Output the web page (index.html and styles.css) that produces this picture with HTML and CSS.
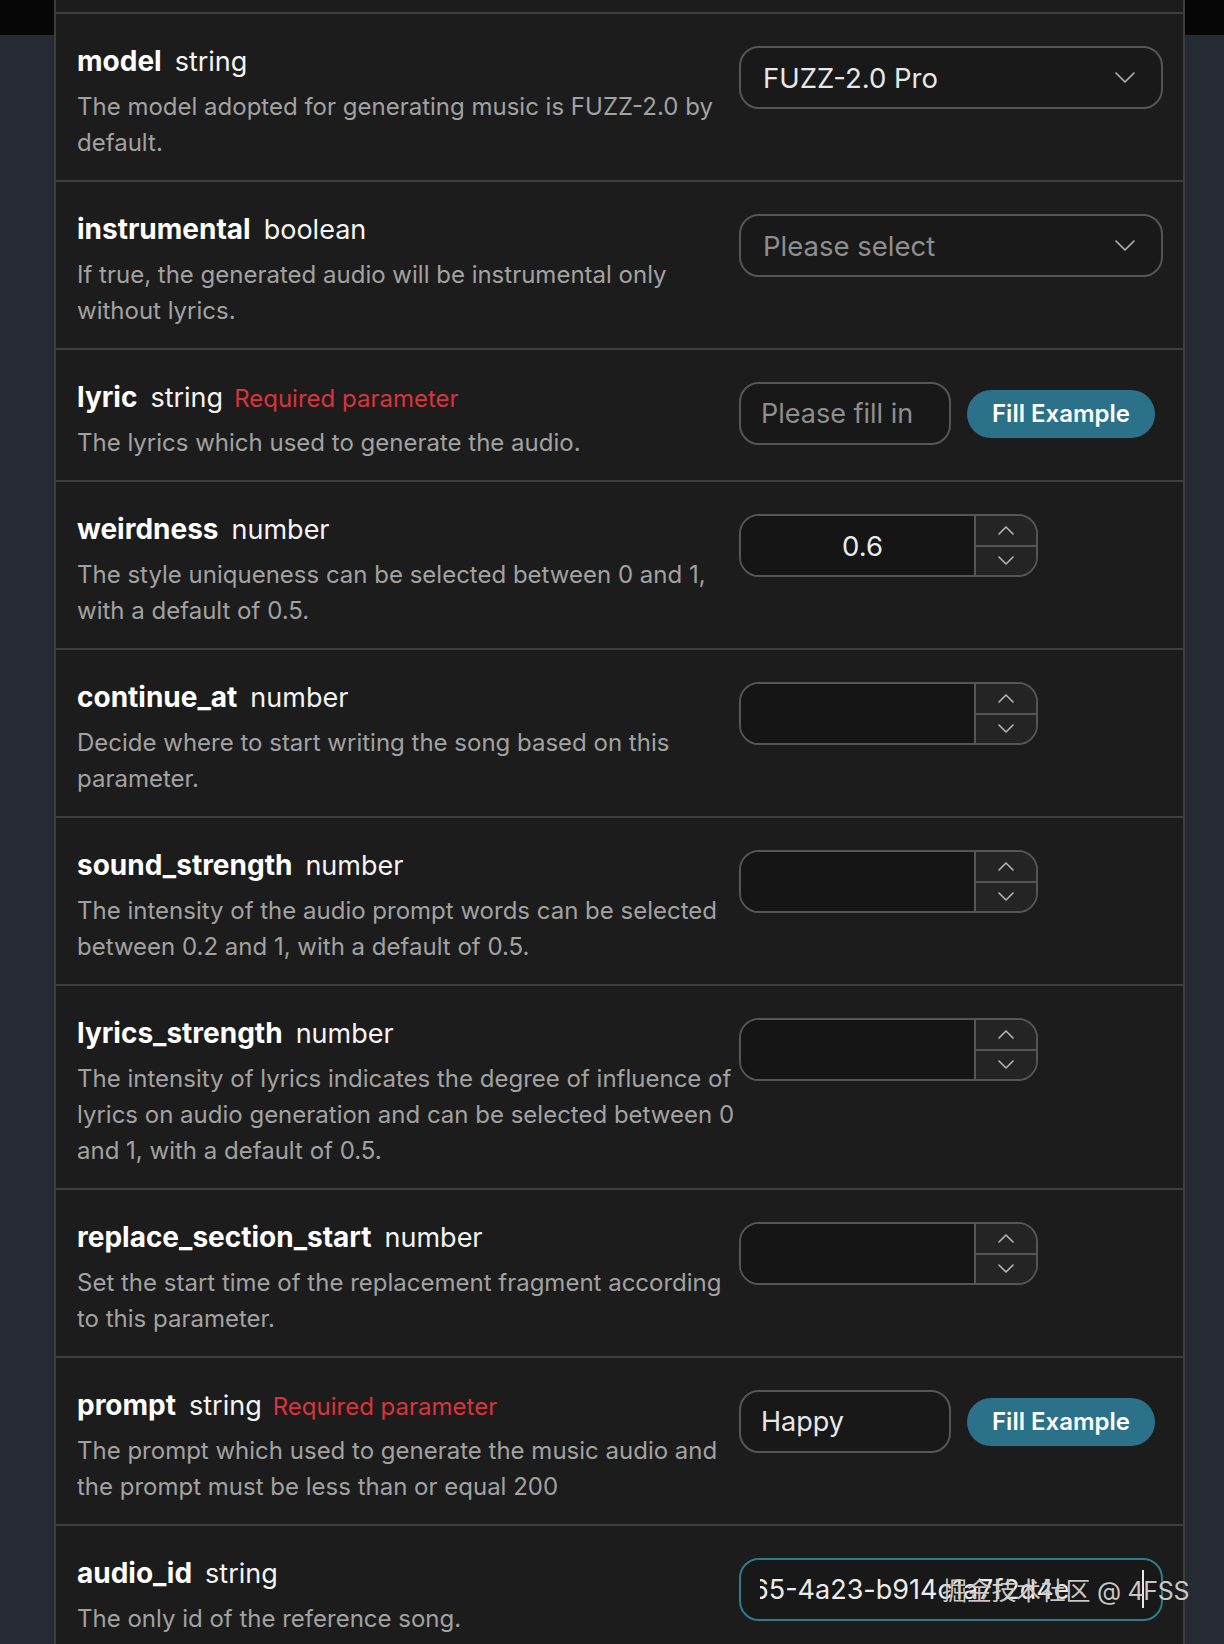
FILE: index.html
```html
<!DOCTYPE html>
<html lang="en">
<head>
<meta charset="utf-8">
<title>Parameters</title>
<link rel="stylesheet" href="styles.css">
</head>
<body>
<div class="page">
  <div class="card">
    <div class="row-tail"></div>

    <div class="param">
      <div class="info">
        <div class="head"><span class="name">model</span><span class="type">string</span></div>
        <p class="desc">The model adopted for generating music is FUZZ-2.0 by default.</p>
      </div>
      <div class="control">
        <div class="select"><span class="val">FUZZ-2.0 Pro</span><svg class="chev" viewBox="0 0 20 11" width="20" height="11"><path d="M1 1 L10 10 L19 1"/></svg></div>
      </div>
    </div>

    <div class="param">
      <div class="info">
        <div class="head"><span class="name">instrumental</span><span class="type">boolean</span></div>
        <p class="desc">If true, the generated audio will be instrumental only without lyrics.</p>
      </div>
      <div class="control">
        <div class="select"><span class="ph">Please select</span><svg class="chev" viewBox="0 0 20 11" width="20" height="11"><path d="M1 1 L10 10 L19 1"/></svg></div>
      </div>
    </div>

    <div class="param">
      <div class="info">
        <div class="head"><span class="name">lyric</span><span class="type">string</span><span class="req">Required parameter</span></div>
        <p class="desc">The lyrics which used to generate the audio.</p>
      </div>
      <div class="control">
        <div class="text-input"><span class="ph">Please fill in</span></div>
        <button class="btn">Fill Example</button>
      </div>
    </div>

    <div class="param">
      <div class="info">
        <div class="head"><span class="name">weirdness</span><span class="type">number</span></div>
        <p class="desc">The style uniqueness can be selected between 0 and 1, with a default of 0.5.</p>
      </div>
      <div class="control">
        <div class="number"><div class="num-field">0.6</div><div class="stepper"><div class="step"><svg viewBox="0 0 16 9" width="16" height="9"><path d="M1 8 L8 1 L15 8"/></svg></div><div class="step down"><svg viewBox="0 0 16 9" width="16" height="9"><path d="M1 1 L8 8 L15 1"/></svg></div></div></div>
      </div>
    </div>

    <div class="param">
      <div class="info">
        <div class="head"><span class="name">continue_at</span><span class="type">number</span></div>
        <p class="desc">Decide where to start writing the song based on this parameter.</p>
      </div>
      <div class="control">
        <div class="number"><div class="num-field"></div><div class="stepper"><div class="step"><svg viewBox="0 0 16 9" width="16" height="9"><path d="M1 8 L8 1 L15 8"/></svg></div><div class="step down"><svg viewBox="0 0 16 9" width="16" height="9"><path d="M1 1 L8 8 L15 1"/></svg></div></div></div>
      </div>
    </div>

    <div class="param">
      <div class="info">
        <div class="head"><span class="name">sound_strength</span><span class="type">number</span></div>
        <p class="desc">The intensity of the audio prompt words can be selected between 0.2 and 1, with a default of 0.5.</p>
      </div>
      <div class="control">
        <div class="number"><div class="num-field"></div><div class="stepper"><div class="step"><svg viewBox="0 0 16 9" width="16" height="9"><path d="M1 8 L8 1 L15 8"/></svg></div><div class="step down"><svg viewBox="0 0 16 9" width="16" height="9"><path d="M1 1 L8 8 L15 1"/></svg></div></div></div>
      </div>
    </div>

    <div class="param">
      <div class="info">
        <div class="head"><span class="name">lyrics_strength</span><span class="type">number</span></div>
        <p class="desc">The intensity of lyrics indicates the degree of influence of lyrics on audio generation and can be selected between 0 and 1, with a default of 0.5.</p>
      </div>
      <div class="control">
        <div class="number"><div class="num-field"></div><div class="stepper"><div class="step"><svg viewBox="0 0 16 9" width="16" height="9"><path d="M1 8 L8 1 L15 8"/></svg></div><div class="step down"><svg viewBox="0 0 16 9" width="16" height="9"><path d="M1 1 L8 8 L15 1"/></svg></div></div></div>
      </div>
    </div>

    <div class="param">
      <div class="info">
        <div class="head"><span class="name">replace_section_start</span><span class="type">number</span></div>
        <p class="desc">Set the start time of the replacement fragment according to this parameter.</p>
      </div>
      <div class="control">
        <div class="number"><div class="num-field"></div><div class="stepper"><div class="step"><svg viewBox="0 0 16 9" width="16" height="9"><path d="M1 8 L8 1 L15 8"/></svg></div><div class="step down"><svg viewBox="0 0 16 9" width="16" height="9"><path d="M1 1 L8 8 L15 1"/></svg></div></div></div>
      </div>
    </div>

    <div class="param">
      <div class="info">
        <div class="head"><span class="name">prompt</span><span class="type">string</span><span class="req">Required parameter</span></div>
        <p class="desc">The prompt which used to generate the music audio and the prompt must be less than or equal 200</p>
      </div>
      <div class="control">
        <div class="text-input"><span class="val">Happy</span></div>
        <button class="btn">Fill Example</button>
      </div>
    </div>

    <div class="param">
      <div class="info">
        <div class="head"><span class="name">audio_id</span><span class="type">string</span></div>
        <p class="desc">The only id of the reference song.</p>
      </div>
      <div class="control">
        <div class="text-input wide focused">
          <div class="clip"><span class="typed">65-4a23-b914c1a7f2d4e</span></div>
          <span class="caret"></span>
          <span class="watermark">掘金技术社区 @ 4FSS</span>
        </div>
      </div>
    </div>
  </div>
</div>
</body>
</html>
```
FILE: styles.css
```css
* { box-sizing: border-box; }

html, body {
  margin: 0;
  padding: 0;
}

body {
  font-family: Inter, "Noto Sans", "Noto Sans CJK SC", sans-serif;
  background: linear-gradient(#060606 0, #060606 35px, #262a33 35px);
  min-height: 1644px;
  color: #f2f2f2;
}

.page {
  display: flex;
  padding-left: 54px;
}

.card {
  width: 1131px;
  min-height: 1644px;
  background: #1c1c1c;
  border-left: 2px solid #3d3d3d;
  border-right: 2px solid #3d3d3d;
}

.row-tail {
  height: 14px;
  border-bottom: 2px solid #3d3d3d;
}

.param {
  display: grid;
  grid-template-columns: 1fr 424px;
  column-gap: 0;
  padding: 29px 20px 19px 21px;
  border-bottom: 2px solid #3d3d3d;
}

.head {
  display: flex;
  align-items: baseline;
  gap: 13px;
  height: 36px;
  line-height: 36px;
  margin-bottom: 10px;
  white-space: nowrap;
  overflow: visible;
}

.name {
  font-size: 28px;
  font-weight: 700;
  color: #ffffff;
}

.type {
  font-size: 27px;
  font-weight: 400;
  color: #f4f4f4;
}

.req {
  margin-left: -2px;
  font-size: 24px;
  color: #d8343d;
}

.desc {
  margin: 0;
  font-size: 24px;
  line-height: 36px;
  color: #a2a2a2;
}

.control {
  padding-top: 3px;
  display: flex;
  align-items: center;
  align-self: start;
  gap: 16px;
}

.select {
  width: 424px;
  height: 63px;
  border: 2px solid #555555;
  border-radius: 20px;
  background: #191919;
  display: flex;
  align-items: center;
  justify-content: space-between;
  padding: 0 26px 0 22px;
  font-size: 27.5px;
}

.val { color: #e8e8e8; }
.ph { color: #8e8e8e; }

.chev path,
.step path {
  fill: none;
  stroke: #b4b4b4;
  stroke-width: 1.6;
  stroke-linecap: round;
  stroke-linejoin: round;
}

.text-input {
  width: 212px;
  height: 63px;
  border: 2px solid #555555;
  border-radius: 20px;
  background: #181818;
  display: flex;
  align-items: center;
  padding: 0 20px;
  font-size: 27px;
}

.text-input.wide {
  width: 424px;
  position: relative;
  padding: 0 0 0 19px;
}

.text-input.focused {
  border-color: #2e7b90;
}

.clip {
  flex: 1;
  overflow: hidden;
  white-space: nowrap;
  margin-right: 20px;
}

.typed {
  display: inline-block;
  margin-left: -8px;
  color: #ececec;
}

.caret {
  position: absolute;
  left: 401px;
  top: 10px;
  width: 2px;
  height: 38px;
  background: #e8e8e8;
}

.watermark {
  position: absolute;
  left: 201px;
  top: 50%;
  transform: translateY(-52%);
  font-size: 25px;
  letter-spacing: -0.3px;
  white-space: nowrap;
  color: rgba(235, 235, 235, 0.85);
  text-shadow: 0 0 1px rgba(0, 0, 0, 0.6);
}

.btn {
  height: 48px;
  padding: 0 25px;
  border: none;
  border-radius: 24px;
  background: #2a7189;
  color: #ffffff;
  font-family: inherit;
  font-size: 24px;
  font-weight: 600;
}

.number {
  width: 299px;
  height: 63px;
  border: 2px solid #555555;
  border-radius: 20px;
  display: flex;
  overflow: hidden;
}

.num-field {
  flex: 1;
  background: #151515;
  display: flex;
  align-items: center;
  justify-content: center;
  padding-left: 10px;
  font-size: 27.5px;
  color: #ececec;
}

.stepper {
  width: 62px;
  border-left: 2px solid #555555;
  background: #242424;
  display: flex;
  flex-direction: column;
}

.step {
  flex: 1;
  display: flex;
  align-items: center;
  justify-content: center;
}

.step.down {
  border-top: 2px solid #555555;
}
```
